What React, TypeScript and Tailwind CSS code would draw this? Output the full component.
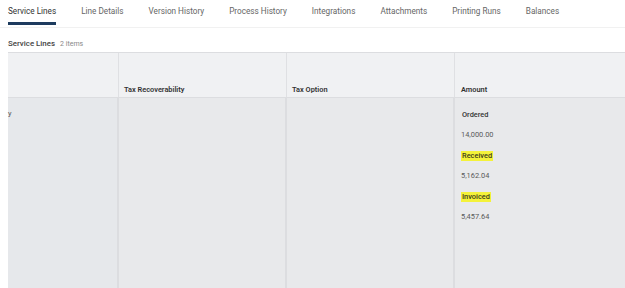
import React from 'react';

const tabs = [
  'Service Lines',
  'Line Details',
  'Version History',
  'Process History',
  'Integrations',
  'Attachments',
  'Printing Runs',
  'Balances',
];

const amounts: { label: string; value: string; marked: boolean }[] = [
  { label: 'Ordered', value: '14,000.00', marked: false },
  { label: 'Received', value: '5,162.04', marked: true },
  { label: 'Invoiced', value: '5,457.64', marked: true },
];

export default function App() {
  return (
    <div className="w-[625px] h-[288px] overflow-hidden bg-white flex flex-col font-['Roboto',sans-serif] text-[#333]">
      {/* Tabs */}
      <div className="flex gap-[25px] px-2 h-[28px] border-b border-[#f1f1f1] shrink-0">
        {tabs.map((t, i) => (
          <div key={t} className="relative flex flex-col">
            <span
              className={`text-[8.2px] leading-none pt-[7px] whitespace-nowrap ${
                i === 0 ? 'text-[#333]' : 'text-[#666]'
              }`}
            >
              {t}
            </span>
            {i === 0 && <div className="mt-auto mb-[2px] h-[3px] bg-[#1d3b5e]" />}
          </div>
        ))}
      </div>

      {/* Section title */}
      <div className="flex items-baseline gap-[5px] px-2 pt-[12px] h-[24px] shrink-0">
        <span className="text-[7.9px] font-medium text-[#444] leading-none">Service Lines</span>
        <span className="text-[7px] text-[#888] leading-none">2 items</span>
      </div>

      {/* Table */}
      <div className="ml-2 flex-1 flex flex-col border-t border-[#dcdde0]">
        <div className="grid grid-cols-[111px_168px_168px_1fr] h-[45px] bg-[#f0f1f3] border-b border-[#dcdde0] shrink-0">
          <div className="border-r border-[#dfe0e3]" />
          <div className="border-r border-[#dfe0e3] flex items-end px-[5px] pb-[2px]">
            <span className="text-[7.4px] font-semibold text-[#333]">Tax Recoverability</span>
          </div>
          <div className="border-r border-[#dfe0e3] flex items-end px-[5px] pb-[2px]">
            <span className="text-[7.4px] font-semibold text-[#333]">Tax Option</span>
          </div>
          <div className="flex items-end px-[6px] pb-[2px]">
            <span className="text-[7.4px] font-semibold text-[#333]">Amount</span>
          </div>
        </div>
        <div className="grid grid-cols-[111px_168px_168px_1fr] flex-1 bg-[#e8e9eb]">
          <div className="border-r-2 border-[#dcdde0] pt-[11px] text-[7.4px] leading-[10px] text-[#555] bg-[#e6e8eb]">
            y
          </div>
          <div className="border-r-2 border-[#dcdde0]" />
          <div className="border-r-2 border-[#dcdde0]" />
          <div className="flex flex-col pt-[12px] px-[6px]">
            {amounts.map((a) => (
              <div key={a.label} className="flex flex-col items-start">
                <span
                  className={`text-[7.4px] leading-[10px] px-[1px] font-medium ${
                    a.marked ? 'bg-[#f4f23a] text-[#3b3b1a]' : 'text-[#333]'
                  } ${a.label === 'Ordered' ? '' : 'mt-[11px]'}`}
                >
                  {a.label}
                </span>
                <span className="text-[7.4px] leading-[10px] text-[#595959] mt-[10px]">{a.value}</span>
              </div>
            ))}
          </div>
        </div>
      </div>
    </div>
  );
}
